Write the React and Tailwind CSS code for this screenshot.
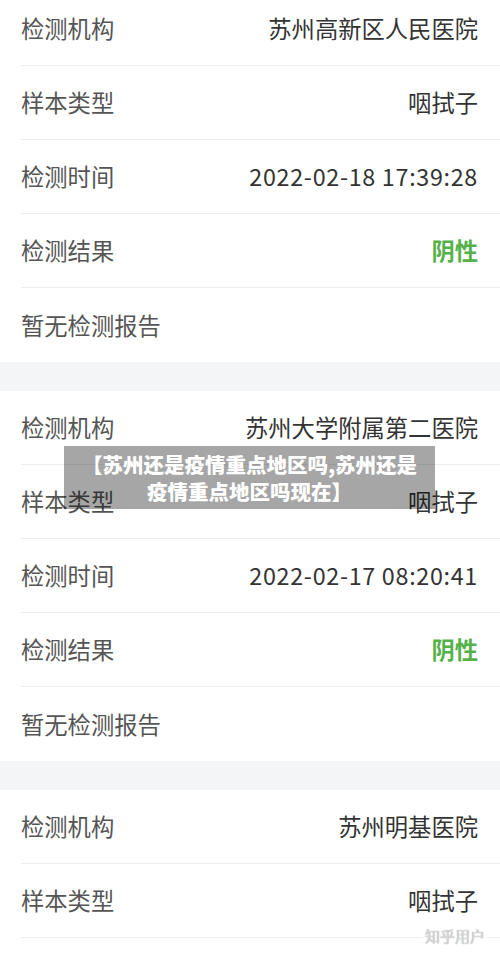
const records = [
  { org: '苏州高新区人民医院', time: '2022-02-18 17:39:28' },
  { org: '苏州大学附属第二医院', time: '2022-02-17 08:20:41' },
  { org: '苏州明基医院', time: '2022-02-16 09:12:05' },
];

function Row({ label, children, last }) {
  return (
    <div
      className={`ml-[21px] pr-[22px] h-[74px] flex items-center justify-between ${
        last ? '' : 'border-b border-[#eeeeee]'
      }`}
    >
      <span className="text-[23.3px] text-[#555555]">{label}</span>
      {children}
    </div>
  );
}

function Card({ record }) {
  return (
    <div className="bg-white">
      <Row label="检测机构">
        <span className="text-[23.3px] text-[#333333]">{record.org}</span>
      </Row>
      <Row label="样本类型">
        <span className="text-[23.3px] text-[#333333]">咽拭子</span>
      </Row>
      <Row label="检测时间">
        <span className="text-[23.3px] tracking-[0.7px] text-[#333333]">{record.time}</span>
      </Row>
      <Row label="检测结果">
        <span className="text-[23.3px] font-bold text-[#55b24a]">阴性</span>
      </Row>
      <Row label="暂无检测报告" last />
    </div>
  );
}

export default function App() {
  return (
    <div
      className="relative h-[955px] w-[500px] overflow-hidden bg-white"
      style={{ fontFamily: '"Noto Sans CJK SC", "Noto Sans", sans-serif' }}
    >
      <div className="-mt-[8px]">
        {records.map((r, i) => (
          <div key={i}>
            {i > 0 && <div className="h-[29px] bg-[#f4f5f7]" />}
            <Card record={r} />
          </div>
        ))}
      </div>

      <div className="absolute left-[64px] top-[446px] w-[371px] h-[63px] bg-black/35 flex flex-col items-center justify-center">
        <p className="text-[20.5px] font-black leading-[27px] text-white">【苏州还是疫情重点地区吗,苏州还是</p>
        <p className="text-[20.5px] font-black leading-[27px] text-white">疫情重点地区吗现在】</p>
      </div>

      <div className="absolute right-[13px] top-[926px] px-[2px] bg-white text-[15px] leading-[20px] text-[#dadada] [text-shadow:0_0_1px_rgba(0,0,0,0.45)]">
        知乎用户
      </div>
    </div>
  );
}
